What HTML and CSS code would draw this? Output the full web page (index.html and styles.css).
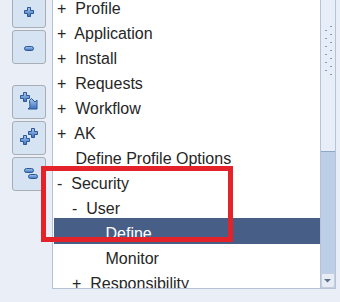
FILE: index.html
```html
<!DOCTYPE html>
<html lang="en">
<head>
    <meta charset="UTF-8">
    <title>Function Navigator</title>
    <link rel="stylesheet" href="styles.css">
</head>
<body>

    <svg class="defs" width="0" height="0">
        <defs>
            <linearGradient id="blue" x1="0" y1="0" x2="0" y2="1">
                <stop offset="0" stop-color="#a9c9f0"/>
                <stop offset="1" stop-color="#3c70bd"/>
            </linearGradient>
            <symbol id="plus" viewBox="0 0 10 10">
                <path d="M3.5 .5h3v3h3v3h-3v3h-3v-3h-3v-3h3z" fill="url(#blue)" stroke="#2b5797" stroke-width="1"/>
            </symbol>
            <symbol id="minus" viewBox="0 0 10 5">
                <rect x=".5" y=".5" width="9" height="4" rx="2" fill="url(#blue)" stroke="#2b5797" stroke-width="1"/>
            </symbol>
        </defs>
    </svg>

    <div class="page">
        <div class="tools">
            <button class="tool" title="Expand">
                <svg width="34" height="34"><use href="#plus" x="12" y="13" width="10" height="10"/></svg>
            </button>
            <button class="tool" title="Collapse">
                <svg width="34" height="34"><use href="#minus" x="12" y="16" width="10" height="5"/></svg>
            </button>
            <button class="tool tool-group" title="Expand branch">
                <svg width="34" height="34">
                    <use href="#plus" x="8" y="7" width="10" height="10"/>
                    <path d="M17.5 15.5l2-2 3.5 3.5 2-2v9h-9l2-2z" fill="url(#blue)" stroke="#2b5797" stroke-width="1"/>
                </svg>
            </button>
            <button class="tool" title="Expand all">
                <svg width="34" height="34">
                    <use href="#plus" x="16" y="7" width="10" height="10"/>
                    <use href="#plus" x="8" y="14" width="10" height="10"/>
                </svg>
            </button>
            <button class="tool" title="Collapse all">
                <svg width="34" height="34">
                    <use href="#minus" x="12" y="11" width="10" height="5"/>
                    <use href="#minus" x="16" y="17" width="10" height="5"/>
                </svg>
            </button>
        </div>

        <div class="tree-panel">
            <ul class="tree">
                <li class="row l1"><span class="sign">+  </span>Profile</li>
                <li class="row l1"><span class="sign">+  </span>Application</li>
                <li class="row l1"><span class="sign">+  </span>Install</li>
                <li class="row l1"><span class="sign">+  </span>Requests</li>
                <li class="row l1"><span class="sign">+  </span>Workflow</li>
                <li class="row l1"><span class="sign">+  </span>AK</li>
                <li class="row l1 leaf">Define Profile Options</li>
                <li class="row l1"><span class="sign">-  </span>Security</li>
                <li class="row l2"><span class="sign">-  </span>User</li>
                <li class="row l3 leaf selected">Define</li>
                <li class="row l3 leaf">Monitor</li>
                <li class="row l2"><span class="sign">+  </span>Responsibility</li>
            </ul>
            <div class="scrollbar">
                <div class="thumb">
                    <svg class="grip" width="13" height="56">
                        <g fill="#7f9ccb">
                            <rect x="9" y="1" width="2" height="1"/><rect x="9" y="9" width="2" height="1"/>
                            <rect x="9" y="17" width="2" height="1"/><rect x="9" y="25" width="2" height="1"/>
                            <rect x="9" y="33" width="2" height="1"/><rect x="9" y="41" width="2" height="1"/>
                            <rect x="9" y="49" width="2" height="1"/>
                            <rect x="4" y="5" width="2" height="1"/><rect x="4" y="13" width="2" height="1"/>
                            <rect x="4" y="21" width="2" height="1"/><rect x="4" y="29" width="2" height="1"/>
                            <rect x="4" y="37" width="2" height="1"/><rect x="4" y="45" width="2" height="1"/>
                        </g>
                    </svg>
                </div>
                <div class="track"></div>
                <div class="arrow-btn">
                    <svg width="13" height="15"><path d="M3 6h7l-3.5 3.5z" fill="#5d6f8c"/></svg>
                </div>
            </div>
        </div>

        <div class="mark"></div>
    </div>

</body>
</html>
```

FILE: styles.css
```css
body {
    margin: 0;
    background-color: #e9eef7;
    font-family: "Liberation Sans", Arial, sans-serif;
    overflow: hidden;
}
.defs {
    position: absolute;
}
.page {
    position: relative;
    display: flex;
    width: 340px;
    height: 302px;
    overflow: hidden;
}
.tools {
    width: 52px;
    flex: none;
    display: flex;
    flex-direction: column;
    gap: 2px;
    padding-left: 12px;
    margin-top: -6px;
    box-sizing: border-box;
}
.tool {
    width: 34px;
    height: 34px;
    padding: 0;
    border: 1px solid #a9adb4;
    border-radius: 3px;
    background-color: #d5e3f3;
    box-sizing: border-box;
}
.tool svg {
    display: block;
    margin: -1px;
}
.tool-group {
    margin-top: 19px;
}
.tree-panel {
    display: flex;
    width: 284px;
    height: 309px;
    margin-top: -20px;
    border: 1px solid #b6c3d6;
    background-color: white;
    box-sizing: border-box;
}
.tree {
    flex: 1;
    list-style: none;
    margin: 0;
    padding: 12px 0 0 1px;
    overflow: hidden;
}
.row {
    height: 25px;
    padding-top: 6px;
    line-height: 19px;
    font-size: 16px;
    color: #262626;
    white-space: pre;
    box-sizing: border-box;
}
.l1 { padding-left: 3px; }
.l2 { padding-left: 18px; }
.l3 { padding-left: 33px; }
.leaf {
    text-indent: 18.5px;
}
.selected {
    height: 26px;
    margin-bottom: -1px;
    background-color: #475f87;
    color: white;
}
.scrollbar {
    width: 14px;
    flex: none;
    display: flex;
    flex-direction: column;
    border-left: 1px solid #b4c3d8;
    background-color: #bccfe6;
}
.thumb {
    height: 171px;
    background-color: #e8eef7;
    border-bottom: 1px solid #8fa8cb;
    box-sizing: border-box;
    padding-top: 44px;
}
.grip {
    display: block;
}
.track {
    flex: 1;
}
.arrow-btn {
    height: 15px;
    background-color: #e8edf5;
    border: 1px solid #c3cfe0;
    border-radius: 0 0 3px 3px;
    box-sizing: border-box;
}
.arrow-btn svg {
    display: block;
    margin: -1px;
}
.mark {
    position: absolute;
    left: 41px;
    top: 166px;
    width: 192px;
    height: 76px;
    border: 5px solid #e3222a;
    box-sizing: border-box;
}
```
